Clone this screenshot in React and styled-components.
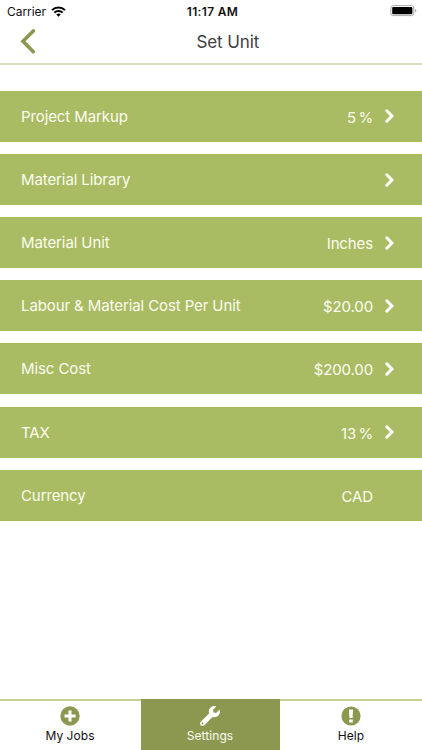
import React, { useState } from 'react';
import styled, { createGlobalStyle } from 'styled-components';

const GlobalStyle = createGlobalStyle`
    * {
        box-sizing: border-box;
    }

    body {
        margin: 0;
        background-color: white;
        font-family: Inter, "Liberation Sans", sans-serif;
    }
`;

const Screen = styled.div`
    display: flex;
    flex-direction: column;
    width: 100%;
    height: 100vh;
    overflow: hidden;
`;

const StatusBar = styled.div`
    display: grid;
    grid-template-columns: 1fr auto 1fr;
    align-items: center;
    height: 22px;
    padding: 0 5px 0 7px;
    font-size: 12px;
    color: #111;
`;

const Carrier = styled.div`
    display: flex;
    align-items: center;
    gap: 5px;
    letter-spacing: -0.05px;
`;

const Clock = styled.div`
    padding-left: 1px;
    font-weight: 600;
    letter-spacing: 0.35px;
`;

const BatteryIcon = styled.svg`
    justify-self: end;
`;

const Header = styled.header`
    display: grid;
    grid-template-columns: 60px 1fr 43px;
    align-items: center;
    height: 43px;
    padding: 0 0 2px 17px;
    border-bottom: 2px solid #d7dfbb;
`;

const BackButton = styled.button`
    display: flex;
    padding: 0 0 0 3px;
    border: none;
    background: none;
`;

const Title = styled.h1`
    margin: 0;
    padding-right: 0.5px;
    text-align: center;
    font-size: 17px;
    font-weight: 400;
    letter-spacing: -0.1px;
    color: #3e3e3e;
`;

const List = styled.main`
    flex: 1;
    display: flex;
    flex-direction: column;
    gap: 12.15px;
    padding-top: 25.9px;
`;

const Row = styled.div`
    display: flex;
    align-items: center;
    height: 51px;
    padding: 0 28px 0 21px;
    background-color: #a9bb63;
    color: #fbfdf0;
    font-size: 15px;
`;

const Label = styled.span`
    flex: 1;
    letter-spacing: -0.1px;
`;

const Value = styled.span`
    margin-right: 12px;
    padding-top: 2px;
    letter-spacing: -0.12px;
    word-spacing: -1.8px;
`;

const Arrow = styled.svg`
    width: 9px;
    height: 14px;
`;

const TabBar = styled.nav`
    display: grid;
    grid-template-columns: 141px 139px 1fr;
    height: 51px;
`;

const Tab = styled.button`
    display: flex;
    flex-direction: column;
    align-items: center;
    padding: 5px 1px 0 0;
    border: none;
    border-top: 2px solid ${({ $active }) => ($active ? '#8c9850' : '#c3cf93')};
    background-color: ${({ $active }) => ($active ? '#8c9850' : 'white')};
    color: ${({ $active }) => ($active ? '#fbfdf0' : '#111')};
    font-family: inherit;
    font-size: 12px;
    line-height: 15px;
    letter-spacing: 0.05px;

    &:last-child {
        padding-right: 0;
    }

    svg {
        width: 20px;
        height: 20px;
        margin-bottom: 2px;
    }
`;

const settings = [
    { label: 'Project Markup', value: '5 %', arrow: true },
    { label: 'Material Library', value: '', arrow: true },
    { label: 'Material Unit', value: 'Inches', arrow: true },
    { label: 'Labour & Material Cost Per Unit', value: '$20.00', arrow: true },
    { label: 'Misc Cost', value: '$200.00', arrow: true },
    { label: 'TAX', value: '13 %', arrow: true },
    { label: 'Currency', value: 'CAD', arrow: false },
];

const PlusIcon = () => (
    <svg viewBox="0 0 20 20">
        <circle cx="10" cy="10" r="9.7" fill="#8c9850" />
        <path d="M10 4.5v11M4.5 10h11" stroke="white" strokeWidth="3" />
    </svg>
);

const WrenchIcon = () => (
    <svg viewBox="0 0 512 512">
        <path
            fill="white"
            d="M507.73 109.1c-2.24-9.03-13.54-12.09-20.12-5.51l-74.36 74.36-67.88-11.31-11.31-67.88 74.36-74.36c6.62-6.62 3.43-17.9-5.66-20.16-47.38-11.74-99.55.91-136.58 37.93-39.64 39.64-50.55 97.1-34.05 147.2L18.74 402.76c-24.99 24.99-24.99 65.51 0 90.5 24.99 24.99 65.51 24.99 90.5 0l213.21-213.21c50.12 16.71 107.47 5.68 147.37-34.22 37.07-37.07 49.7-89.32 37.91-136.73zM64 472c-13.25 0-24-10.75-24-24 0-13.26 10.75-24 24-24s24 10.74 24 24c0 13.25-10.75 24-24 24z"
        />
    </svg>
);

const HelpIcon = () => (
    <svg viewBox="0 0 20 20">
        <circle cx="10" cy="10" r="9.6" fill="#8c9850" />
        <path d="M8 3.5h4l-.4 8.5H8.4zM8.2 13.4h3.6v3H8.2z" fill="white" />
    </svg>
);

const tabs = [
    { name: 'My Jobs', Icon: PlusIcon },
    { name: 'Settings', Icon: WrenchIcon },
    { name: 'Help', Icon: HelpIcon },
];

export default function App() {
    const [activeTab, setActiveTab] = useState('Settings');

    return (
        <Screen>
            <GlobalStyle />
            <StatusBar>
                <Carrier>
                    <span>Carrier</span>
                    <svg width="15" height="11" viewBox="0 0 15 11">
                        <g fill="none" stroke="black" strokeWidth="2">
                            <path d="M1 4.1a9.2 9.2 0 0 1 13 0" />
                            <path d="M3.4 6.6a5.8 5.8 0 0 1 8.2 0" />
                        </g>
                        <path d="M7.5 10.8L5.3 8.5a3.1 3.1 0 0 1 4.4 0z" />
                    </svg>
                </Carrier>
                <Clock>11:17 AM</Clock>
                <BatteryIcon width="27" height="12" viewBox="0 0 27 12">
                    <rect x="0.8" y="0.6" width="23" height="10" rx="2.4" fill="white" stroke="#aaa" />
                    <rect x="2.2" y="2" width="20.2" height="7.2" rx="1" fill="black" />
                    <path d="M25 4v3.4q1.4-.5 1.4-1.7T25 4z" fill="#aaa" />
                </BatteryIcon>
            </StatusBar>
            <Header>
                <BackButton aria-label="Back">
                    <svg width="17" height="26" viewBox="0 0 17 26">
                        <path d="M13.3 1.9L3 12.3l10.3 10.4" fill="none" stroke="#8c9850" strokeWidth="3.6" strokeLinecap="round" />
                    </svg>
                </BackButton>
                <Title>Set Unit</Title>
            </Header>
            <List>
                {settings.map(({ label, value, arrow }) => (
                    <Row key={label}>
                        <Label>{label}</Label>
                        <Value>{value}</Value>
                        <Arrow viewBox="0 0 9 14">
                            {arrow && <path d="M1.8 1.8L6.9 7l-5.1 5.2" fill="none" stroke="white" strokeWidth="3" strokeLinecap="round" />}
                        </Arrow>
                    </Row>
                ))}
            </List>
            <TabBar>
                {tabs.map(({ name, Icon }) => (
                    <Tab key={name} $active={name === activeTab} onClick={() => setActiveTab(name)}>
                        <Icon />
                        {name}
                    </Tab>
                ))}
            </TabBar>
        </Screen>
    );
}
